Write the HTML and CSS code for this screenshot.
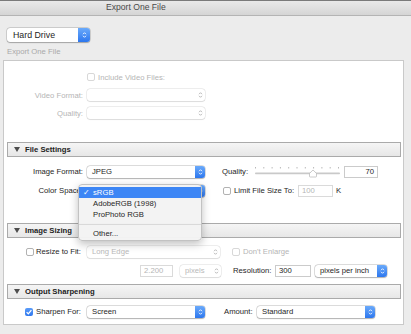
FILE: index.html
```html
<!DOCTYPE html>
<html>
<head>
    <title>Export One File</title>
    <link rel="stylesheet" href="styles.css">
</head>
<body>

    <div class="titlebar">Export One File</div>

    <div class="toolbar">
        <div class="pop dest">Hard Drive
            <span class="step"><svg class="chev" width="5" height="8" viewBox="0 0 5 8"><path d="M1 3.2 L2.5 1.7 L4 3.2 M1 4.8 L2.5 6.3 L4 4.8"/></svg></span>
        </div>
    </div>
    <div class="presetName">Export One File</div>

    <div class="panel">

        <!-- Video (disabled) -->
        <div class="sect video">
            <div class="row sm">
                <span class="lbl"></span>
                <span class="check off"></span>
                <span class="dim ml3">Include Video Files:</span>
            </div>
            <div class="row sm">
                <span class="lbl">Video Format:</span>
                <div class="pop off w118">
                    <span class="step"><svg class="chev" width="5" height="8" viewBox="0 0 5 8"><path d="M1 3.2 L2.5 1.7 L4 3.2 M1 4.8 L2.5 6.3 L4 4.8"/></svg></span>
                </div>
            </div>
            <div class="row sm">
                <span class="lbl">Quality:</span>
                <div class="pop off w118">
                    <span class="step"><svg class="chev" width="5" height="8" viewBox="0 0 5 8"><path d="M1 3.2 L2.5 1.7 L4 3.2 M1 4.8 L2.5 6.3 L4 4.8"/></svg></span>
                </div>
            </div>
        </div>

        <!-- File Settings -->
        <div class="shead"><span class="tri"></span>File Settings</div>
        <div class="sect fileSet">
            <div class="row">
                <span class="lbl">Image Format:</span>
                <div class="pop w118">JPEG
                    <span class="step"><svg class="chev" width="5" height="8" viewBox="0 0 5 8"><path d="M1 3.2 L2.5 1.7 L4 3.2 M1 4.8 L2.5 6.3 L4 4.8"/></svg></span>
                </div>
                <span class="side quality">Quality:</span>
                <svg class="slider" width="85" height="13" viewBox="0 0 85 13">
                    <g stroke="#b9b9b9" stroke-width="1">
                        <path d="M0.5 2 V3.5 M8.8 2 V3.5 M17.1 2 V3.5 M25.4 2 V3.5 M33.7 2 V3.5 M42 2 V3.5 M50.3 2 V3.5 M58.6 2 V3.5 M66.9 2 V3.5 M75.2 2 V3.5 M83.5 2 V3.5"/>
                    </g>
                    <rect x="0" y="7.6" width="85" height="1.6" rx="0.8" fill="#c9c9c9"/>
                    <path d="M54.5 8.4 L58 5 L61.5 8.4 V11.3 Q61.5 12 60.8 12 H55.2 Q54.5 12 54.5 11.3 Z" fill="#fff" stroke="#a8a8a8" stroke-width="0.6"/>
                </svg>
                <div class="field num w34 ml4">70</div>
            </div>
            <div class="row">
                <span class="lbl">Color Space:</span>
                <div class="pop w118">
                    <span class="step"><svg class="chev" width="5" height="8" viewBox="0 0 5 8"><path d="M1 3.2 L2.5 1.7 L4 3.2 M1 4.8 L2.5 6.3 L4 4.8"/></svg></span>
                    <div class="menu">
                        <div class="mi sel"><span class="tick">&#10003;</span>sRGB</div>
                        <div class="mi">AdobeRGB (1998)</div>
                        <div class="mi">ProPhoto RGB</div>
                        <div class="msep"></div>
                        <div class="mi">Other...</div>
                    </div>
                </div>
                <span class="check ml18"></span>
                <span class="limit">Limit File Size To:</span>
                <div class="field off w35 ml3">100</div>
                <span class="ml3">K</span>
            </div>
        </div>

        <!-- Image Sizing -->
        <div class="shead"><span class="tri"></span>Image Sizing</div>
        <div class="sect sizing">
            <div class="row">
                <span class="clbl"><span class="check"></span><span class="ml2">Resize to Fit:</span></span>
                <div class="pop off w133">Long Edge
                    <span class="step"><svg class="chev" width="5" height="8" viewBox="0 0 5 8"><path d="M1 3.2 L2.5 1.7 L4 3.2 M1 4.8 L2.5 6.3 L4 4.8"/></svg></span>
                </div>
                <span class="check off ml12"></span>
                <span class="dim ml3">Don't Enlarge</span>
            </div>
            <div class="row">
                <div class="field off w33 ml136">2.200</div>
                <div class="pop off w41 ml7">pixels
                    <span class="step"><svg class="chev" width="5" height="8" viewBox="0 0 5 8"><path d="M1 3.2 L2.5 1.7 L4 3.2 M1 4.8 L2.5 6.3 L4 4.8"/></svg></span>
                </div>
                <span class="side resolution">Resolution:</span>
                <div class="field w36">300</div>
                <div class="pop w72 ml4">pixels per inch
                    <span class="step"><svg class="chev" width="5" height="8" viewBox="0 0 5 8"><path d="M1 3.2 L2.5 1.7 L4 3.2 M1 4.8 L2.5 6.3 L4 4.8"/></svg></span>
                </div>
            </div>
        </div>

        <!-- Output Sharpening -->
        <div class="shead"><span class="tri"></span>Output Sharpening</div>
        <div class="sect sharpen">
            <div class="row">
                <span class="clbl sharp"><span class="check on"><svg width="8" height="8" viewBox="0 0 8 8"><path d="M1.6 4.1 L3.3 5.8 L6.4 2.1" fill="none" stroke="#fff" stroke-width="1.3"/></svg></span><span class="ml3">Sharpen For:</span></span>
                <div class="pop w118">Screen
                    <span class="step"><svg class="chev" width="5" height="8" viewBox="0 0 5 8"><path d="M1 3.2 L2.5 1.7 L4 3.2 M1 4.8 L2.5 6.3 L4 4.8"/></svg></span>
                </div>
                <span class="side amount">Amount:</span>
                <div class="pop w118 ml3">Standard
                    <span class="step"><svg class="chev" width="5" height="8" viewBox="0 0 5 8"><path d="M1 3.2 L2.5 1.7 L4 3.2 M1 4.8 L2.5 6.3 L4 4.8"/></svg></span>
                </div>
            </div>
        </div>

    </div>

</body>
</html>
```

FILE: styles.css
```css
* { box-sizing: border-box; }
body {
    margin: 0;
    width: 411px;
    height: 334px;
    overflow: hidden;
    background: #ececec;
    font-family: "Liberation Sans", Arial, sans-serif;
    font-size: 7.7px;
    color: #1e1e1e;
}

/* Window chrome */
.titlebar {
    height: 16px;
    border-top: 1px solid #7a7a7a;
    border-bottom: 1px solid #b4b4b4;
    background: linear-gradient(#e9e9e9, #d5d5d5);
    padding-left: 106px;
    font-size: 8.6px;
    line-height: 13px;
    color: #4a4a4a;
}
.toolbar {
    height: 26px;
    padding: 12px 0 0 7px;
}
.presetName {
    margin-top: 5px;
    height: 10px;
    line-height: 10px;
    padding-left: 7px;
    color: #a9a9a9;
}
.panel {
    margin: 3px 0 0 3px;
    width: 401px;
    height: 265px;
    border: 1px solid #c9c9c9;
    background: #fff;
}

/* Sections */
.sect {
    display: flex;
    flex-direction: column;
    gap: 6px;
}
.video { padding: 10px 0 23px; }
.fileSet { padding: 8px 0 26px; }
.sizing { padding: 7px 0 7px; }
.sharpen { padding: 6px 0 6px; }

.shead {
    margin: 0 2px 0 3px;
    height: 15px;
    border: 1px solid #aaaaaa;
    background: linear-gradient(#f5f5f5, #e7e7e7);
    display: flex;
    align-items: center;
    padding-left: 6px;
    font-weight: bold;
    color: #222;
}
.tri {
    width: 0;
    height: 0;
    border-left: 3px solid transparent;
    border-right: 3px solid transparent;
    border-top: 5px solid #4d4d4d;
    margin-right: 5px;
}

/* Rows */
.row {
    display: flex;
    align-items: center;
    height: 13px;
    white-space: nowrap;
}
.row.sm { height: 12px; }
.lbl {
    width: 79px;
    margin-right: 4px;
    text-align: right;
}
.video .lbl, .dim { color: #b5b5b5; }
.clbl {
    width: 79px;
    margin-right: 4px;
    padding-left: 22px;
    display: flex;
    align-items: center;
}
.clbl.sharp { padding-left: 21px; }
.side { display: inline-block; }
.quality { margin-left: 17px; width: 33px; }
.resolution { margin-left: 12px; width: 42px; }
.amount { margin-left: 19px; width: 30px; }
.limit { margin-left: 3px; width: 61px; }

.ml2 { margin-left: 2px; }
.ml3 { margin-left: 3px; }
.ml4 { margin-left: 4px; }
.ml7 { margin-left: 7px; }
.ml12 { margin-left: 12px; }
.ml18 { margin-left: 18px; }
.ml136 { margin-left: 136px; }

.w33 { width: 33px; }
.w34 { width: 34px; }
.w35 { width: 35px; }
.w36 { width: 36px; }
.w41 { width: 41px; }
.w72 { width: 72px; }
.w118 { width: 118px; }
.w133 { width: 133px; }

/* Popup buttons */
.pop {
    position: relative;
    height: 12px;
    line-height: 12px;
    padding-left: 5px;
    background: #fff;
    border-radius: 3px;
    box-shadow: 0 0 0 0.5px rgba(0, 0, 0, 0.22), 0 0.5px 1.2px rgba(0, 0, 0, 0.22);
}
.pop .step {
    position: absolute;
    top: 0;
    right: 0;
    bottom: 0;
    width: 10px;
    border-radius: 0 3px 3px 0;
    background: linear-gradient(#6aaafb, #2d77ee);
    display: flex;
    align-items: center;
    justify-content: center;
    color: #fff;
}
.chev path {
    fill: none;
    stroke: currentColor;
    stroke-width: 0.9;
}
.pop.off {
    color: #b9b9b9;
    box-shadow: 0 0 0 0.5px rgba(0, 0, 0, 0.13), 0 0.5px 1px rgba(0, 0, 0, 0.08);
}
.pop.off .step {
    background: none;
    color: #b0b0b0;
}
.pop.dest {
    width: 83px;
    height: 14px;
    line-height: 14px;
    padding-left: 6px;
    font-size: 8.8px;
    color: #1e1e1e;
}
.pop.dest .step { width: 12px; }

/* Text fields */
.field {
    height: 12px;
    line-height: 10px;
    padding-left: 3px;
    border: 1px solid #cbcbcb;
    background: #fff;
}
.field.num { text-align: right; padding-right: 3px; }
.field.off { color: #b5b5b5; border-color: #dadada; }

/* Checkboxes */
.check {
    display: inline-block;
    flex: none;
    width: 8px;
    height: 8px;
    border: 1px solid #b2b2b2;
    border-radius: 2px;
    background: #fff;
}
.check.off { border-color: #d8d8d8; }
.check.on {
    border: none;
    background: linear-gradient(#5a9cf9, #2f78ee);
}
.check.on svg { display: block; }

.slider { display: block; flex: none; }

/* Open popup menu */
.menu {
    position: absolute;
    left: -9px;
    top: -1px;
    width: 124px;
    padding: 2px 0 1px;
    background: rgba(243, 243, 243, 0.98);
    border: 0.5px solid #c2c2c2;
    border-radius: 4px;
    box-shadow: 0 3px 9px rgba(0, 0, 0, 0.25);
    z-index: 5;
    color: #262626;
}
.mi {
    position: relative;
    height: 11px;
    line-height: 11px;
    padding-left: 14px;
}
.mi.sel {
    background: #3d86f5;
    color: #fff;
}
.tick {
    position: absolute;
    left: 4px;
    top: 0;
}
.msep {
    height: 8px;
    padding-top: 4px;
}
.msep::after {
    content: "";
    display: block;
    border-top: 1px solid #d9d9d9;
}
```
